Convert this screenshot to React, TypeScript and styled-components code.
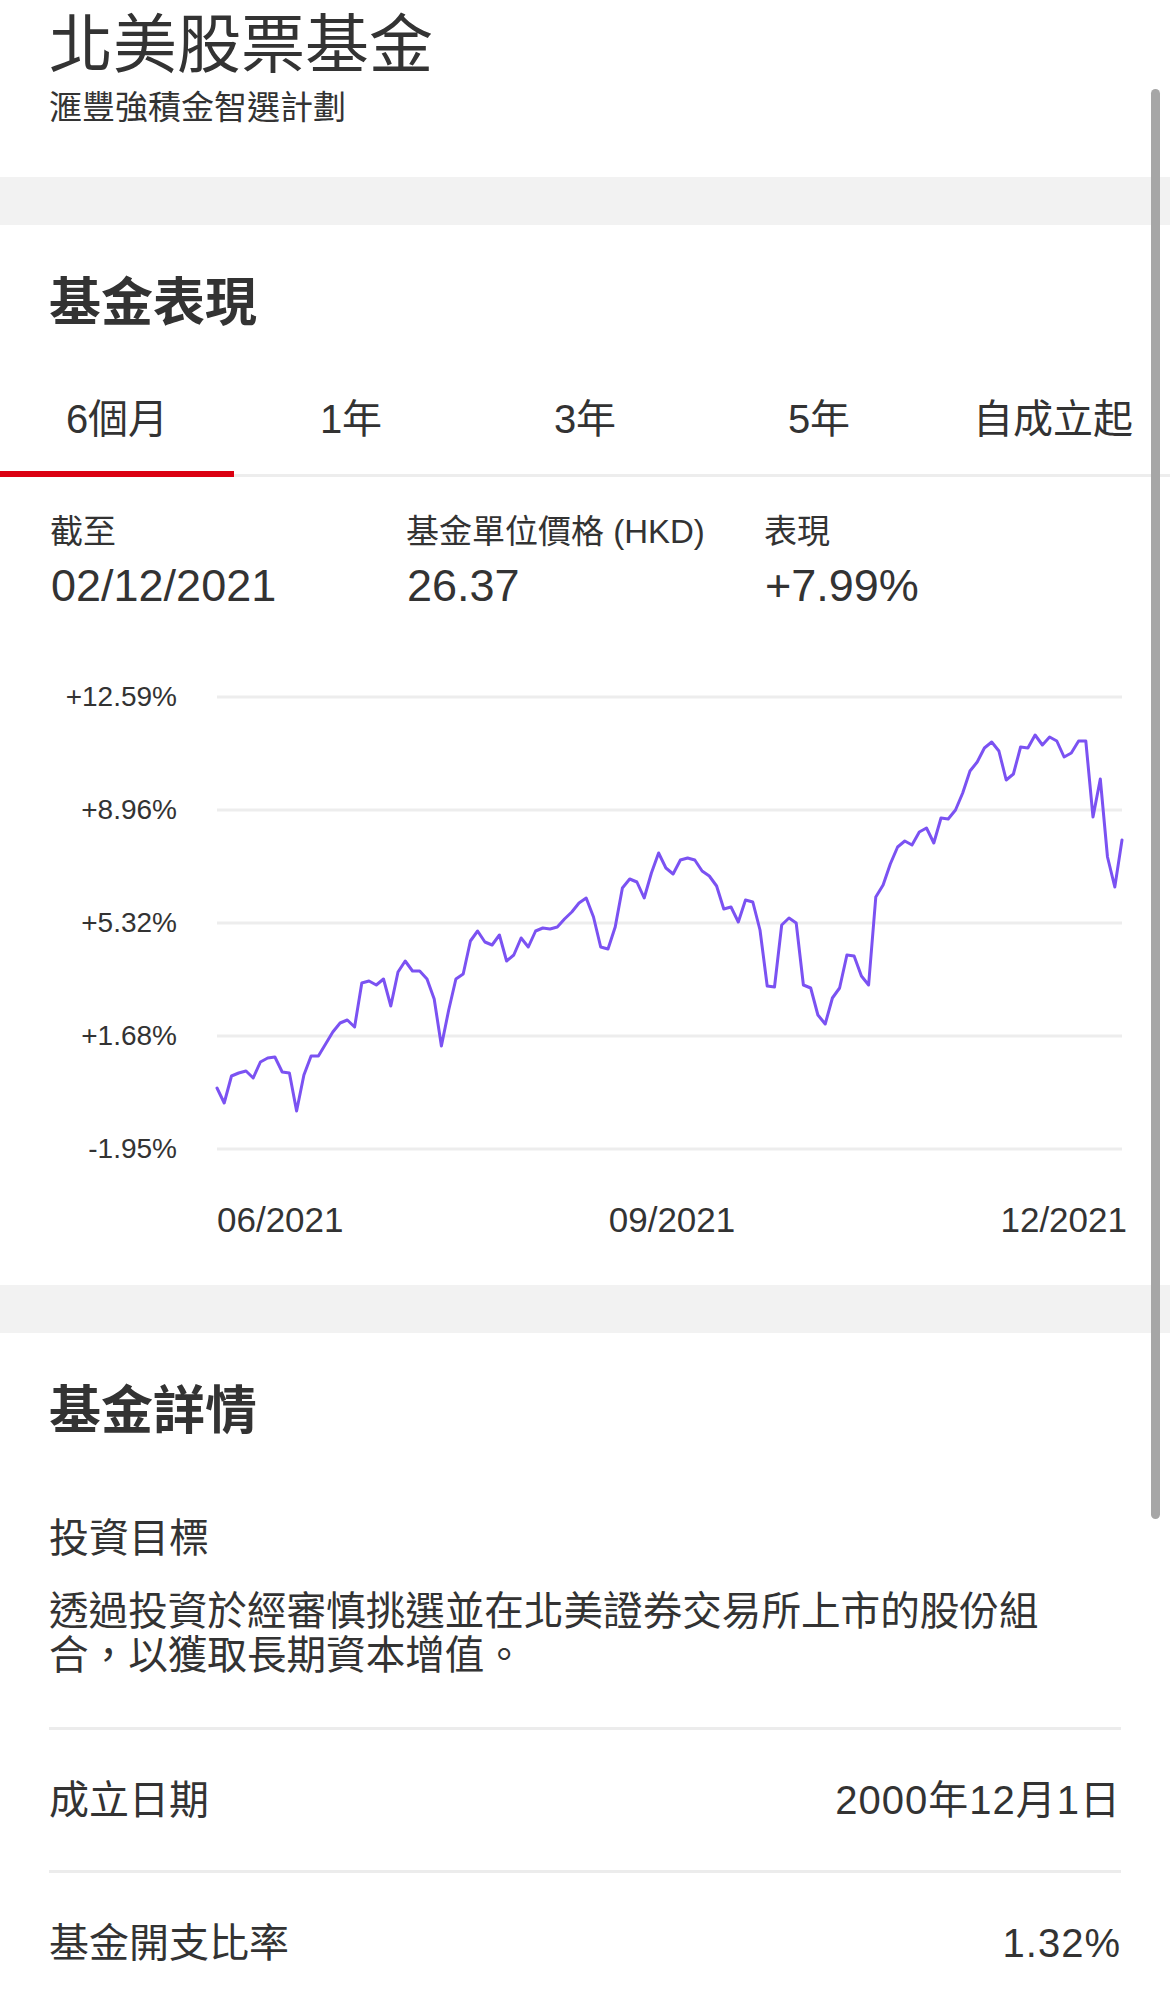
import React from 'react';
import styled, { createGlobalStyle } from 'styled-components';

const GlobalStyle = createGlobalStyle`
  html, body {
    margin: 0;
    padding: 0;
    background: #fff;
    overflow: hidden;
  }
  body {
    font-family: "Liberation Sans", "Noto Sans CJK TC", sans-serif;
    color: #333;
  }
`;

const Page = styled.div`
  position: relative;
  width: 1170px;
  height: 1990px;
  overflow: hidden;
`;

const Header = styled.header`
  padding: 7px 49px 49px;
`;

const Title = styled.h1`
  margin: 0;
  font-size: 64px;
  line-height: 76px;
  font-weight: 400;
`;

const Subtitle = styled.div`
  margin-top: 5px;
  font-size: 33px;
  line-height: 40px;
`;

const Band = styled.div`
  height: 48px;
  background: #f2f2f2;
`;

const Section = styled.section`
  padding-top: 48px;
`;

const SectionTitle = styled.h2`
  margin: 0;
  padding: 0 49px;
  font-size: 52px;
  line-height: 61px;
  font-weight: 700;
`;

const Tabs = styled.div`
  display: flex;
  box-shadow: inset 0 -3px 0 #ededed;
`;

const Tab = styled.div<{ $active?: boolean }>`
  flex: 1;
  text-align: center;
  padding: 62px 0 29px;
  font-size: 40px;
  line-height: 46px;
  border-bottom: 6px solid ${(p) => (p.$active ? '#db0011' : 'transparent')};
`;

const Stats = styled.div`
  display: grid;
  grid-template-columns: 356px 358px auto;
  padding: 35px 51px 0;
`;

const StatLabel = styled.div`
  margin-left: -1px;
  font-size: 33px;
  line-height: 40px;
`;

const StatValue = styled.div`
  margin-top: 7px;
  font-size: 45px;
  line-height: 54px;
`;

const ChartRow = styled.div`
  display: flex;
  margin-top: 69px;
  padding-left: 51px;
`;

const YAxis = styled.div`
  width: 126px;
  height: 482px;
  margin-right: 40px;
  display: flex;
  flex-direction: column;
  justify-content: space-between;
  text-align: right;
  font-size: 28px;
  line-height: 30px;
  flex-shrink: 0;
`;

const Plot = styled.svg`
  flex-shrink: 0;
  overflow: visible;
`;

const XAxis = styled.div`
  display: flex;
  justify-content: space-between;
  width: 910px;
  margin: 35px 0 0 217px;
  padding-bottom: 44px;
  font-size: 35px;
  line-height: 42px;
`;

const FieldLabel = styled.div`
  padding: 0 49px;
  margin-top: 72px;
  font-size: 40px;
  line-height: 48px;
`;

const Paragraph = styled.p`
  margin: 27px 49px 0;
  max-width: 1010px;
  font-size: 39.6px;
  line-height: 44px;
`;

const DetailList = styled.div`
  margin: 50px 49px 0;
`;

const DetailRow = styled.div`
  display: flex;
  justify-content: space-between;
  border-top: 3px solid #ececec;
  padding: 46px 0;
  font-size: 40px;
  line-height: 48px;
`;

const DetailValue = styled.span`
  letter-spacing: 1px;
`;

const ScrollThumb = styled.div`
  position: absolute;
  top: 89px;
  right: 10px;
  width: 9px;
  height: 1430px;
  border-radius: 5px;
  background: #a6a6a6;
`;

const tabs = ['6個月', '1年', '3年', '5年', '自成立起'];
const yLabels = ['+12.59%', '+8.96%', '+5.32%', '+1.68%', '-1.95%'];
const xLabels = ['06/2021', '09/2021', '12/2021'];

// pixel offsets below the top grid line, one per trading day
const points = [
  391, 406, 379, 376, 374, 381, 365, 361, 360, 375, 376, 414, 378, 359, 359, 347, 335, 326, 323, 330,
  286, 284, 288, 282, 309, 275, 264, 274, 274, 282, 302, 349, 313, 282, 277, 244, 234, 245, 248, 238,
  264, 258, 241, 250, 234, 231, 232, 230, 222, 215, 206, 201, 220, 250, 252, 230, 191, 182, 185, 201,
  176, 156, 171, 177, 163, 161, 163, 174, 179, 189, 212, 210, 225, 203, 205, 233, 289, 290, 228, 221,
  226, 288, 291, 318, 327, 301, 291, 258, 259, 279, 288, 200, 188, 167, 150, 144, 148, 135, 131, 146,
  121, 122, 113, 96, 74, 65, 51, 45, 54, 83, 77, 50, 51, 38, 48, 40, 44, 60, 56, 44,
  44, 120, 82, 160, 190, 143,
];

const PLOT_W = 905;
const PLOT_H = 482;
const TOP = 15;
const STEP = 113;

const Chart: React.FC = () => {
  const dx = PLOT_W / (points.length - 1);
  const d = points
    .map((v, i) => `${i === 0 ? 'M' : 'L'}${(i * dx).toFixed(1)},${TOP + v}`)
    .join(' ');
  return (
    <Plot width={PLOT_W} height={PLOT_H} viewBox={`0 0 ${PLOT_W} ${PLOT_H}`}>
      {yLabels.map((_, i) => (
        <line key={i} x1={0} x2={PLOT_W} y1={TOP + i * STEP} y2={TOP + i * STEP} stroke="#ededed" strokeWidth={3} />
      ))}
      <path d={d} fill="none" stroke="#7b52f2" strokeWidth={3} strokeLinejoin="round" strokeLinecap="round" />
    </Plot>
  );
};

const App: React.FC = () => {
  return (
    <Page>
      <GlobalStyle />
      <Header>
        <Title>北美股票基金</Title>
        <Subtitle>滙豐強積金智選計劃</Subtitle>
      </Header>
      <Band />
      <Section>
        <SectionTitle>基金表現</SectionTitle>
        <Tabs>
          {tabs.map((t, i) => (
            <Tab key={t} $active={i === 0}>{t}</Tab>
          ))}
        </Tabs>
        <Stats>
          <div>
            <StatLabel>截至</StatLabel>
            <StatValue>02/12/2021</StatValue>
          </div>
          <div>
            <StatLabel>基金單位價格 (HKD)</StatLabel>
            <StatValue>26.37</StatValue>
          </div>
          <div>
            <StatLabel>表現</StatLabel>
            <StatValue>+7.99%</StatValue>
          </div>
        </Stats>
        <ChartRow>
          <YAxis>
            {yLabels.map((l) => (
              <div key={l}>{l}</div>
            ))}
          </YAxis>
          <Chart />
        </ChartRow>
        <XAxis>
          {xLabels.map((l) => (
            <span key={l}>{l}</span>
          ))}
        </XAxis>
      </Section>
      <Band />
      <Section>
        <SectionTitle>基金詳情</SectionTitle>
        <FieldLabel>投資目標</FieldLabel>
        <Paragraph>透過投資於經審慎挑選並在北美證券交易所上市的股份組合，以獲取長期資本增值。</Paragraph>
        <DetailList>
          <DetailRow>
            <span>成立日期</span>
            <DetailValue>2000年12月1日</DetailValue>
          </DetailRow>
          <DetailRow>
            <span>基金開支比率</span>
            <DetailValue>1.32%</DetailValue>
          </DetailRow>
        </DetailList>
      </Section>
      <ScrollThumb />
    </Page>
  );
};

export default App;
